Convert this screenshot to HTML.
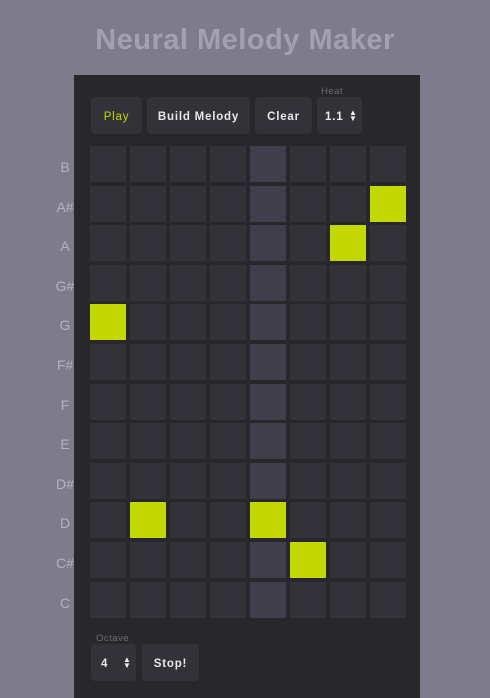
<html><head><style>
html,body{margin:0;width:490px;height:698px;overflow:hidden}
body{background:#7d7b8c;font-family:"Liberation Sans",sans-serif;position:relative}
h1{position:absolute;top:24px;left:0;width:490px;text-align:center;margin:0;font-size:29px;color:#a3a1b1;font-weight:bold;letter-spacing:0.5px}
.panel{position:absolute;left:74px;top:75px;width:346px;height:623px;background:#28272c}
.b{position:absolute;background:#333238;border-radius:4px;color:#e8e8ea;font-size:11.5px;font-weight:bold;letter-spacing:.8px;display:flex;align-items:center;justify-content:center;height:37px;padding-top:2px;box-sizing:border-box}
.c{position:absolute;width:36px;height:36px;background:#333238}
.hl{background:#403e4b}
.on{background:#c2d800}
.l{position:absolute;width:30px;left:50px;text-align:center;color:#b5b3bd;font-size:14px}
.sm{position:absolute;color:#6c6b72;font-size:9.5px;letter-spacing:.5px}
.ar{position:absolute;font-size:8px;line-height:6px;color:#eee}
</style></head><body>
<h1>Neural Melody Maker</h1>
<div class="panel"></div>
<div class="b" style="left:91px;top:97px;width:51px;color:#c2d800;font-weight:normal">Play</div>
<div class="b" style="left:147px;top:97px;width:103px">Build Melody</div>
<div class="b" style="left:255px;top:97px;width:57px">Clear</div>
<div class="sm" style="left:321px;top:86px">Heat</div>
<div class="b" style="left:317px;top:97px;width:45px;justify-content:flex-start;padding-left:8px">1.1</div>
<div class="ar" style="left:349px;top:110px">▲<br>▼</div>
<div id="g"></div>
<div class="sm" style="left:96px;top:633px">Octave</div>
<div class="b" style="left:91px;top:644px;width:45px;justify-content:flex-start;padding-left:10px">4</div>
<div class="ar" style="left:123px;top:657px">▲<br>▼</div>
<div class="b" style="left:142px;top:644px;width:57px">Stop!</div>
<script>
var n=["B","A#","A","G#","G","F#","F","E","D#","D","C#","C"];
var on={"1,7":1,"2,6":1,"4,0":1,"9,1":1,"9,4":1,"10,5":1};
var h="";
for(var r=0;r<12;r++){var y=146+r*39.6;
h+='<div class="l" style="top:'+(y+13)+'px">'+n[r]+'</div>';
for(var c=0;c<8;c++){var cl="c"+(on[r+","+c]?" on":(c==4?" hl":""));
h+='<div class="'+cl+'" style="left:'+(90+c*40)+'px;top:'+y+'px"></div>';}}
document.getElementById("g").innerHTML=h;
</script>
</body></html>
